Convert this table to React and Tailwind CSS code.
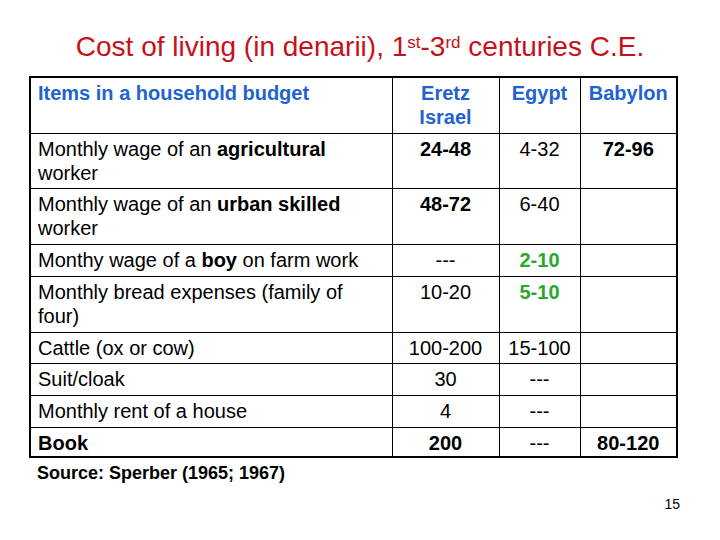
import React from 'react';

const rows = [
  {
    item: <>Monthly wage of an <b>agricultural</b> worker</>,
    israel: <b>24-48</b>,
    egypt: '4-32',
    babylon: <b>72-96</b>,
    h: 'h-[55px]',
  },
  {
    item: <>Monthly wage of an <b>urban skilled</b> worker</>,
    israel: <b>48-72</b>,
    egypt: '6-40',
    babylon: '',
    h: 'h-[56px]',
  },
  {
    item: <>Monthy wage of a <b>boy</b> on farm work</>,
    israel: '---',
    egypt: <b className="text-[#2aa82a]">2-10</b>,
    babylon: '',
    h: 'h-[32px]',
  },
  {
    item: 'Monthly bread expenses (family of four)',
    israel: '10-20',
    egypt: <b className="text-[#2aa82a]">5-10</b>,
    babylon: '',
    h: 'h-[56px]',
  },
  { item: 'Cattle (ox or cow)', israel: '100-200', egypt: '15-100', babylon: '', h: 'h-[31px]' },
  { item: 'Suit/cloak', israel: '30', egypt: '---', babylon: '', h: 'h-[32px]' },
  { item: 'Monthly rent of a house', israel: '4', egypt: '---', babylon: '', h: 'h-[32px]' },
  {
    item: <b>Book</b>,
    israel: <b>200</b>,
    egypt: '---',
    babylon: <b>80-120</b>,
    h: 'h-[30px]',
  },
];

function App() {
  return (
    <div
      className="w-[720px] h-[540px] bg-white flex flex-col"
      style={{ fontFamily: '"Liberation Sans", Arial, sans-serif' }}
    >
      <h1 className="pt-[30px] text-center text-[28px] leading-[34px] text-[#c8101a]">
        Cost of living (in denarii), 1<sup className="text-[17px]">st</sup>-3<sup className="text-[17px]">rd</sup> centuries C.E.
      </h1>

      <table className="ml-[29px] mt-[12px] w-[649px] table-fixed border-collapse border-[2px] border-black text-[20px] leading-[24px] text-black">
        <thead>
          <tr className="h-[56px] align-top">
            <th className="w-[362px] border border-black pl-[7px] pr-[20px] pt-[3px] text-left font-bold text-[#1e63d0]">
              Items in a household budget
            </th>
            <th className="w-[107px] border border-black pt-[3px] text-center font-bold text-[#1e63d0]">
              Eretz<br />Israel
            </th>
            <th className="w-[81px] border border-black pt-[3px] text-center font-bold text-[#1e63d0]">
              Egypt
            </th>
            <th className="border border-black pt-[3px] text-center font-bold text-[#1e63d0]">
              Babylon
            </th>
          </tr>
        </thead>
        <tbody>
          {rows.map((r, i) => (
            <tr key={i} className={`${r.h} align-top`}>
              <td className="border border-black pl-[7px] pr-[24px] pt-[3px]">{r.item}</td>
              <td className="border border-black pt-[3px] text-center">{r.israel}</td>
              <td className="border border-black pt-[3px] text-center">{r.egypt}</td>
              <td className="border border-black pt-[3px] text-center">{r.babylon}</td>
            </tr>
          ))}
        </tbody>
      </table>

      <p className="ml-[37px] mt-[3px] text-[18px] leading-[24px] font-bold text-black">
        Source: Sperber (1965; 1967)
      </p>

      <div className="mt-[10px] mr-[40px] text-right text-[14px] leading-[18px] text-black">15</div>
    </div>
  );
}

export default App;
